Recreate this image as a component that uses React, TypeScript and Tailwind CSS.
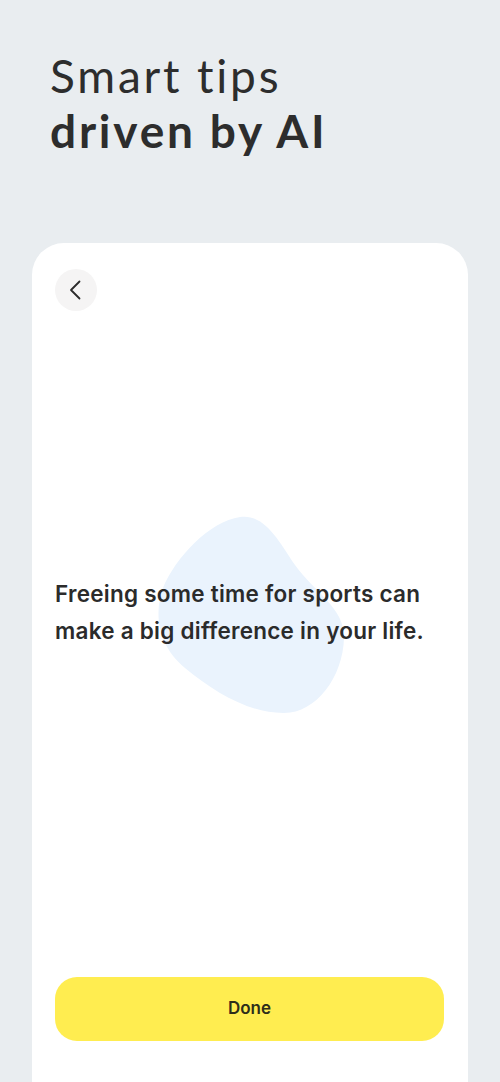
export default function App() {
  return (
    <div className="flex min-h-[1082px] w-[500px] flex-col bg-[#e9edf0]">
      <div className="h-[243px] px-[50px] pt-[48px] font-['Lato',sans-serif] text-[46px] leading-[55px] text-[#2d2d2d]">
        <div className="font-normal tracking-[2.8px]">Smart tips</div>
        <div className="font-bold tracking-[2.8px]">driven by AI</div>
      </div>

      <div className="mx-[32px] flex h-[839px] flex-col rounded-t-[32px] bg-white pl-[23px] pr-[24px] pt-[26px] pb-[41px] font-['Inter',sans-serif]">
        <button className="flex h-[42px] w-[42px] items-center justify-center rounded-full bg-[#f5f4f4] text-[#2b2b2b]">
          <svg width="24" height="24" viewBox="0 0 24 24" fill="none" stroke="currentColor" strokeWidth="1.8" strokeLinecap="round" strokeLinejoin="round">
            <path d="M15.5 3.5 7 12l8.5 8.5" />
          </svg>
        </button>

        <div className="relative flex-1">
          <svg
            className="absolute left-[100px] top-[202px]"
            width="190"
            height="202"
            viewBox="0 0 190 202"
          >
            <path
              d="M85 4 C110 0 125 30 140 52 C160 80 190 95 189 125 C188 165 160 201 128 200 C95 200 60 180 30 155 C2 132 -1 100 8 75 C20 45 55 8 85 4 Z"
              fill="#eaf3fd"
            />
          </svg>
          <p className="relative pt-[264px] text-[22.5px] font-semibold leading-[37px] tracking-[0.25px] text-[#2b2b2b]">
            Freeing some time for sports can make a big difference in your life.
          </p>
        </div>

        <button className="h-[64px] w-full rounded-[22px] bg-[#ffed50] text-[17px] font-semibold text-[#2e2e1a]">
          Done
        </button>
      </div>
    </div>
  );
}
